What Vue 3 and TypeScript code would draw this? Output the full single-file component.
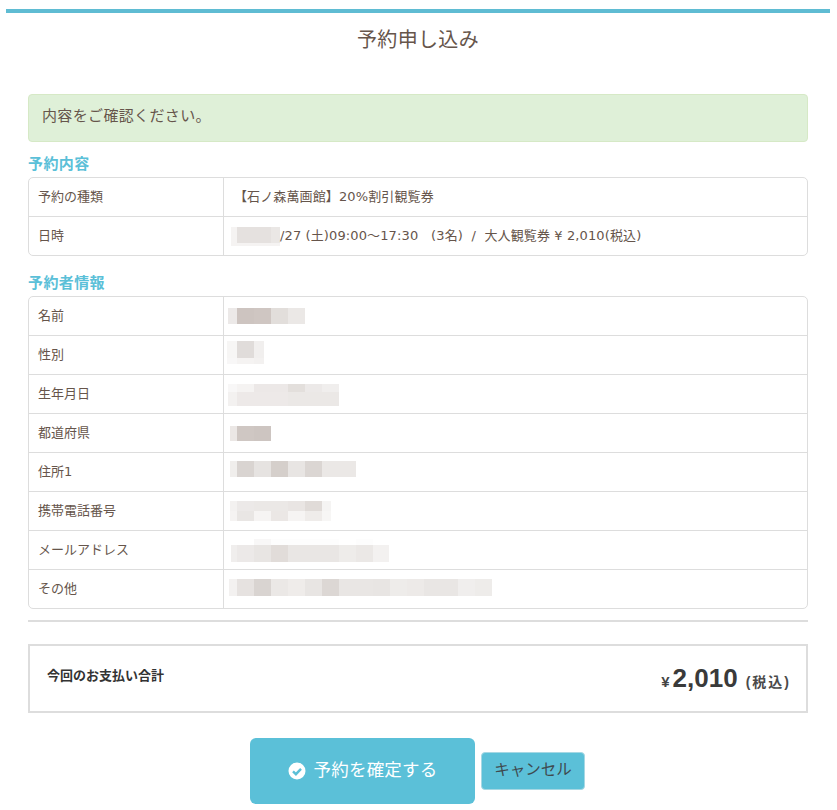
<script setup lang="ts">
interface Mosaic {
  x: number
  top: number
  widths: number[]
  rows: { h: number; colors: string[] }[]
}
interface Row {
  label: string
  text?: string
  mosaic?: Mosaic
  after?: string
}

const span = (first: number, count: number, last: number): number[] => [first, ...Array(count).fill(17), last]

const reservation: Row[] = [
  { label: '予約の種類', text: '【石ノ森萬画館】20%割引観覧券' },
  {
    label: '日時',
    mosaic: {
      x: 231,
      top: 10,
      widths: [6, 34, 9],
      rows: [
        { h: 16, colors: ['#f5f3f2', '#e5e1df', '#eae7e5'] },
        { h: 3, colors: ['#f5f3f2', '#f5f3f2', '#f5f3f2'] },
      ],
    },
    after: '/27 (土)09:00～17:30   (3名)  /  大人観覧券 ¥ 2,010(税込)',
  },
]

const customer: Row[] = [
  {
    label: '名前',
    mosaic: { x: 228, top: 11, widths: span(9, 3, 17), rows: [{ h: 16, colors: ['#ece9e8', '#cdc4c0', '#cfc6c2', '#e2dedb', '#ebe8e6'] }] },
  },
  {
    label: '性別',
    mosaic: {
      x: 227,
      top: 5,
      widths: [10, 17, 10],
      rows: [
        { h: 17, colors: ['#f7f6f5', '#e0dcda', '#f1efee'] },
        { h: 6, colors: ['#f8f7f7', '#f5f3f2', '#f3f1f0'] },
      ],
    },
  },
  {
    label: '生年月日',
    mosaic: {
      x: 228,
      top: 9,
      widths: span(9, 5, 17),
      rows: [
        { h: 8, colors: ['#f8f7f7', '#f5f3f2', '#ece8e7', '#ece8e7', '#e3dfdc', '#ece9e8', '#f0eeed'] },
        { h: 14, colors: ['#f3f1f0', '#ede9e8', '#ede9e8', '#ede9e8', '#ebe8e6', '#ebe8e6', '#ebe8e6'] },
      ],
    },
  },
  {
    label: '都道府県',
    mosaic: { x: 230, top: 12, widths: [7, 17, 17], rows: [{ h: 15, colors: ['#ebe7e5', '#cfc7c3', '#cdc5c1'] }] },
  },
  {
    label: '住所1',
    mosaic: {
      x: 230,
      top: 8,
      widths: span(7, 6, 17),
      rows: [{ h: 16, colors: ['#f0eeec', '#d9d4d1', '#e6e3e1', '#d5cfcb', '#e8e5e3', '#dbd6d3', '#ebe8e6', '#ebe8e6'] }],
    },
  },
  {
    label: '携帯電話番号',
    mosaic: {
      x: 230,
      top: 9,
      widths: span(7, 5, 9),
      rows: [
        { h: 10, colors: ['#f3f1f0', '#ece9e8', '#ebe8e6', '#ebe8e6', '#e9e5e3', '#e0dbd8', '#f5f4f3'] },
        { h: 10, colors: ['#f5f3f2', '#e9e6e4', '#f6f4f3', '#ebe7e5', '#f6f4f3', '#efecea', '#f7f6f5'] },
      ],
    },
  },
  {
    label: 'メールアドレス',
    mosaic: {
      x: 231,
      top: 8,
      widths: span(6, 8, 16),
      rows: [
        { h: 6, colors: ['#fff', '#fff', '#f8f7f7', '#fdfdfd', '#fdfdfd', '#fdfdfd', '#fdfdfd', '#fff', '#fdfdfd', '#fff'] },
        { h: 17, colors: ['#f0eeed', '#ece9e8', '#e8e5e3', '#e1dcd9', '#e9e6e4', '#e9e6e4', '#e9e6e4', '#eeecea', '#ebe8e6', '#f3f1f0'] },
      ],
    },
  },
  {
    label: 'その他',
    mosaic: {
      x: 229,
      top: 9,
      widths: span(8, 14, 17),
      rows: [
        {
          h: 17,
          colors: ['#f3f1f0', '#e6e2e0', '#d9d4d1', '#ebe8e6', '#efecea', '#e8e5e3', '#dcd7d4', '#e9e6e4', '#e9e6e4', '#e8e5e3', '#eeecea', '#edeae8', '#e9e6e4', '#e9e6e4', '#f0eeed', '#eeecea'],
        },
      ],
    },
  },
]

const sections = [
  { title: '予約内容', rows: reservation },
  { title: '予約者情報', rows: customer },
]

const mosaicStyle = (m: Mosaic) => ({
  marginLeft: `${m.x - 234}px`,
  marginTop: `${m.top}px`,
})
</script>

<template>
  <div class="page">
    <div class="panel">
      <h1 class="title">予約申し込み</h1>
      <div class="content">
        <div class="alert">内容をご確認ください。</div>

        <section v-for="section in sections" :key="section.title" class="section">
          <h2 class="heading">{{ section.title }}</h2>
          <div class="table">
            <div v-for="row in section.rows" :key="row.label" class="row">
              <div class="label">{{ row.label }}</div>
              <div class="value">
                <span v-if="row.text" class="text">{{ row.text }}</span>
                <div v-if="row.mosaic" class="mosaic" :style="mosaicStyle(row.mosaic)">
                  <div v-for="(r, ri) in row.mosaic.rows" :key="ri" class="mosaic-row">
                    <i
                      v-for="(c, ci) in r.colors"
                      :key="ci"
                      :style="{ width: row.mosaic.widths[ci] + 'px', height: r.h + 'px', background: c }"
                    ></i>
                  </div>
                </div>
                <span v-if="row.after" class="text">{{ row.after }}</span>
              </div>
            </div>
          </div>
        </section>

        <hr class="rule" />

        <div class="total">
          <div class="total-label">今回のお支払い合計</div>
          <div class="total-price">
            <span class="yen">¥</span><span class="amount">2,010</span><span class="tax">(税込)</span>
          </div>
        </div>

        <div class="actions">
          <button class="confirm" type="button">
            <svg class="check" viewBox="0 0 18 18" width="18" height="18" aria-hidden="true">
              <circle cx="9" cy="9" r="8.5" fill="#fff" />
              <path d="M5 9.4 7.9 12.2 13 6.9" fill="none" stroke="#5bc0d8" stroke-width="2.4" />
            </svg>
            <span>予約を確定する</span>
          </button>
          <button class="cancel" type="button">キャンセル</button>
        </div>
      </div>
    </div>
  </div>
</template>

<style scoped>
.page {
  width: 837px;
  height: 810px;
  overflow: hidden;
  padding: 9px 6px 0;
  box-sizing: border-box;
  background: #fff;
  font-family: "DejaVu Sans", "Noto Sans CJK JP", sans-serif;
  color: #66554b;
}
.panel {
  width: 824px;
  border-top: 4px solid #5fbcd3;
}
.title {
  margin: 0;
  padding-top: 13px;
  height: 69px;
  box-sizing: border-box;
  font-size: 20px;
  font-weight: 400;
  letter-spacing: 0.35px;
  line-height: 29px;
  text-align: center;
}
.content {
  margin: 12px 22px 0 22px;
}
.alert {
  height: 48px;
  box-sizing: border-box;
  padding: 0 13px 8px;
  display: flex;
  align-items: center;
  font-size: 15px;
  letter-spacing: 0.35px;
  background: #dff0d8;
  border: 1px solid #d6e9c6;
  border-radius: 4px;
}
.section {
  margin-top: 11px;
}
.section + .section {
  margin-top: 16px;
}
.heading {
  margin: 0;
  height: 24px;
  font-size: 15px;
  font-weight: 700;
  letter-spacing: 0.4px;
  line-height: 23px;
  color: #5bc0d8;
}
.table {
  border: 1px solid #ddd;
  border-radius: 5px;
  font-size: 13px;
}
.row {
  display: grid;
  grid-template-columns: 195px 1fr;
  height: 39px;
  border-top: 1px solid #ddd;
  box-sizing: border-box;
}
.row:first-child {
  border-top: 0;
  height: 38px;
}
.label {
  padding-left: 9px;
  border-right: 1px solid #ddd;
  line-height: 38px;
}
.value {
  display: flex;
  align-items: flex-start;
  padding-left: 10px;
  line-height: 38px;
  letter-spacing: 0.12px;
  white-space: pre;
}
.mosaic {
  flex: none;
}
.mosaic-row {
  display: flex;
}
.mosaic-row i {
  display: block;
}
.rule {
  margin: 11px 0 0;
  height: 2px;
  border: 0;
  background: #ddd;
}
.total {
  margin-top: 22px;
  height: 69px;
  box-sizing: border-box;
  border: 2px solid #ddd;
  padding: 0 15px 0 17px;
  display: flex;
  justify-content: space-between;
}
.total-label {
  margin-top: 20px;
  font-size: 13px;
  font-weight: 700;
  line-height: 19px;
  color: #333;
}
.total-price {
  margin-top: 16px;
  font-family: "Liberation Sans", "Noto Sans CJK JP", sans-serif;
  font-weight: 700;
  color: #333;
  line-height: 32px;
}
.yen {
  font-size: 15px;
  color: #444;
}
.amount {
  margin-left: 3px;
  font-size: 26px;
  color: #3a3a3a;
}
.tax {
  margin-left: 8px;
  font-size: 14px;
  letter-spacing: 2px;
  color: #4a4a4a;
}
.actions {
  margin-top: 25px;
  display: flex;
  align-items: center;
  gap: 6px;
  padding-left: 222px;
}
button {
  font-family: inherit;
  cursor: pointer;
  background: #5bc0d8;
}
.confirm {
  width: 225px;
  height: 66px;
  border: 0;
  border-radius: 6px;
  display: flex;
  align-items: center;
  justify-content: center;
  gap: 8px;
  font-size: 17.5px;
  letter-spacing: 0.2px;
  color: #fff;
  padding: 0 0 6px;
}
.check {
  margin-top: 6px;
}
.cancel {
  width: 104px;
  height: 38px;
  border: 1px solid #a6d8e4;
  border-radius: 4px;
  padding: 0 0 6px;
  font-size: 15.5px;
  color: #3f4a4f;
}
</style>
